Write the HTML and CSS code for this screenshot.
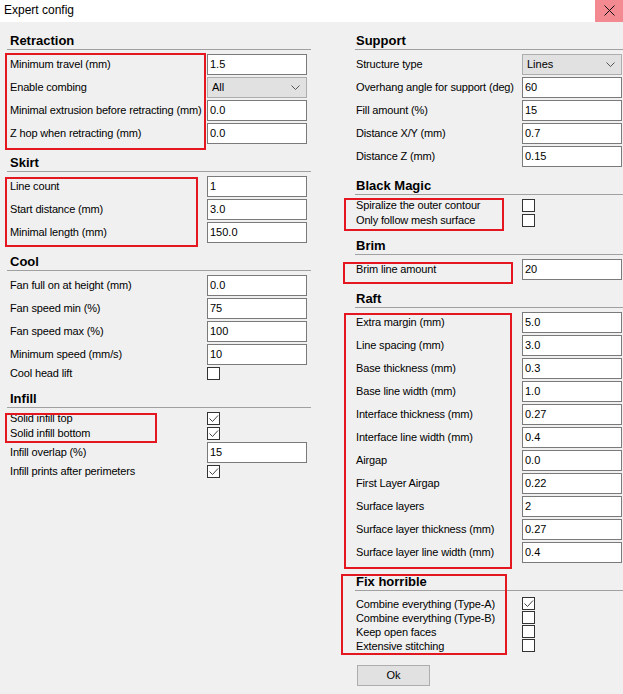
FILE: index.html
```html
<!DOCTYPE html>
<html>
<head>
<meta charset="utf-8">
<title>Expert config</title>
<link rel="stylesheet" href="styles.css">
</head>
<body>
<div class="window">
  <div class="titlebar">
    <span class="title">Expert config</span>
    <span class="close"><svg width="11" height="11" viewBox="0 0 11 11"><path d="M0.5 0.5 L10.5 10.5 M10.5 0.5 L0.5 10.5" stroke="#111" stroke-width="1" fill="none"/></svg></span>
  </div>
  <div class="content">
    <div class="col col-left">
      <section class="sec">
        <h2 class="head">Retraction</h2>
        <div class="rows">
          <span class="lbl">Minimum travel (mm)</span><div class="field">1.5</div>
          <span class="lbl">Enable combing</span><div class="select">All<svg class="chev" width="9" height="5" viewBox="0 0 9 5"><path d="M0.5 0.5 L4.5 4.5 L8.5 0.5" stroke="#555" stroke-width="1" fill="none"/></svg></div>
          <span class="lbl">Minimal extrusion before retracting (mm)</span><div class="field">0.0</div>
          <span class="lbl">Z hop when retracting (mm)</span><div class="field">0.0</div>
        </div>
      </section>
      <section class="sec">
        <h2 class="head">Skirt</h2>
        <div class="rows">
          <span class="lbl">Line count</span><div class="field">1</div>
          <span class="lbl">Start distance (mm)</span><div class="field">3.0</div>
          <span class="lbl">Minimal length (mm)</span><div class="field">150.0</div>
        </div>
      </section>
      <section class="sec">
        <h2 class="head">Cool</h2>
        <div class="rows">
          <span class="lbl">Fan full on at height (mm)</span><div class="field">0.0</div>
          <span class="lbl">Fan speed min (%)</span><div class="field">75</div>
          <span class="lbl">Fan speed max (%)</span><div class="field">100</div>
          <span class="lbl">Minimum speed (mm/s)</span><div class="field">10</div>
          <span class="lbl">Cool head lift</span><span class="cb"></span>
        </div>
      </section>
      <section class="sec">
        <h2 class="head">Infill</h2>
        <div class="rows">
          <span class="lbl">Solid infill top</span><span class="cb"><svg width="11" height="11" viewBox="0 0 11 11"><path d="M1.5 5.5 L4.5 8.5 L10 2.5" stroke="#444" stroke-width="1" fill="none"/></svg></span>
          <span class="lbl">Solid infill bottom</span><span class="cb"><svg width="11" height="11" viewBox="0 0 11 11"><path d="M1.5 5.5 L4.5 8.5 L10 2.5" stroke="#444" stroke-width="1" fill="none"/></svg></span>
          <span class="lbl">Infill overlap (%)</span><div class="field">15</div>
          <span class="lbl">Infill prints after perimeters</span><span class="cb"><svg width="11" height="11" viewBox="0 0 11 11"><path d="M1.5 5.5 L4.5 8.5 L10 2.5" stroke="#444" stroke-width="1" fill="none"/></svg></span>
        </div>
      </section>
    </div>
    <div class="col col-right">
      <section class="sec">
        <h2 class="head">Support</h2>
        <div class="rows">
          <span class="lbl">Structure type</span><div class="select">Lines<svg class="chev" width="9" height="5" viewBox="0 0 9 5"><path d="M0.5 0.5 L4.5 4.5 L8.5 0.5" stroke="#555" stroke-width="1" fill="none"/></svg></div>
          <span class="lbl">Overhang angle for support (deg)</span><div class="field">60</div>
          <span class="lbl">Fill amount (%)</span><div class="field">15</div>
          <span class="lbl">Distance X/Y (mm)</span><div class="field">0.7</div>
          <span class="lbl">Distance Z (mm)</span><div class="field">0.15</div>
        </div>
      </section>
      <section class="sec">
        <h2 class="head">Black Magic</h2>
        <div class="rows">
          <span class="lbl">Spiralize the outer contour</span><span class="cb"></span>
          <span class="lbl">Only follow mesh surface</span><span class="cb"></span>
        </div>
      </section>
      <section class="sec">
        <h2 class="head">Brim</h2>
        <div class="rows">
          <span class="lbl">Brim line amount</span><div class="field">20</div>
        </div>
      </section>
      <section class="sec">
        <h2 class="head">Raft</h2>
        <div class="rows">
          <span class="lbl">Extra margin (mm)</span><div class="field">5.0</div>
          <span class="lbl">Line spacing (mm)</span><div class="field">3.0</div>
          <span class="lbl">Base thickness (mm)</span><div class="field">0.3</div>
          <span class="lbl">Base line width (mm)</span><div class="field">1.0</div>
          <span class="lbl">Interface thickness (mm)</span><div class="field">0.27</div>
          <span class="lbl">Interface line width (mm)</span><div class="field">0.4</div>
          <span class="lbl">Airgap</span><div class="field">0.0</div>
          <span class="lbl">First Layer Airgap</span><div class="field">0.22</div>
          <span class="lbl">Surface layers</span><div class="field">2</div>
          <span class="lbl">Surface layer thickness (mm)</span><div class="field">0.27</div>
          <span class="lbl">Surface layer line width (mm)</span><div class="field">0.4</div>
        </div>
      </section>
      <section class="sec">
        <h2 class="head">Fix horrible</h2>
        <div class="rows rows-fix">
          <span class="lbl">Combine everything (Type-A)</span><span class="cb"><svg width="11" height="11" viewBox="0 0 11 11"><path d="M1.5 5.5 L4.5 8.5 L10 2.5" stroke="#444" stroke-width="1" fill="none"/></svg></span>
          <span class="lbl">Combine everything (Type-B)</span><span class="cb"></span>
          <span class="lbl">Keep open faces</span><span class="cb"></span>
          <span class="lbl">Extensive stitching</span><span class="cb"></span>
        </div>
      </section>
      <div class="btn">Ok</div>
    </div>
  </div>
  <div class="mark mark-retraction"></div>
  <div class="mark mark-skirt"></div>
  <div class="mark mark-infill"></div>
  <div class="mark mark-magic"></div>
  <div class="mark mark-brim"></div>
  <div class="mark mark-raft"></div>
  <div class="mark mark-fix"></div>
</div>
</body>
</html>
```
FILE: styles.css
```css
* { box-sizing: border-box; }
html, body { margin: 0; padding: 0; }
body {
  font-family: "Liberation Sans", Arial, sans-serif;
  font-size: 11px;
  color: #000;
  background: #f0f0f0;
}
.window {
  position: relative;
  width: 623px;
  height: 694px;
  background: #f0f0f0;
  overflow: hidden;
}
.titlebar {
  height: 22px;
  background: #fff;
  display: flex;
  align-items: center;
  justify-content: space-between;
}
.title {
  font-size: 12px;
  padding-left: 4px;
  padding-bottom: 2px;
}
.close {
  width: 28px;
  height: 22px;
  background: #f38991;
  display: flex;
  align-items: center;
  justify-content: center;
  padding-bottom: 1px;
}
.content {
  display: flex;
  padding-top: 10px;
}
.col-left {
  margin-left: 7px;
  width: 304px;
}
.col-right {
  margin-left: 44px;
  width: 268px;
}
.sec + .sec { margin-top: 10px; }
.head {
  margin: 0;
  height: 18px;
  line-height: 17px;
  font-size: 13px;
  font-weight: bold;
  border-bottom: 1px solid #a0a0a0;
  padding-left: 3px;
}
.col-right .head { padding-left: 1px; }
.rows {
  display: grid;
  grid-template-columns: 197px 100px;
  row-gap: 2px;
  align-items: center;
  padding: 4px 0 0 3px;
}
.col-right .rows {
  grid-template-columns: 166px 100px;
  padding-left: 1px;
}
.col-right .rows-fix { padding-top: 6px; row-gap: 1px; }
.rows-fix .lbl { line-height: 12px; }
.lbl {
  line-height: 13px;
  white-space: nowrap;
  letter-spacing: -0.15px;
}
.field {
  height: 21px;
  background: #fff;
  border: 1px solid #7a7a7a;
  line-height: 19px;
  padding-left: 2px;
}
.select {
  height: 21px;
  background: #e1e1e1;
  border: 1px solid #adadad;
  line-height: 19px;
  padding-left: 4px;
  display: flex;
  align-items: center;
  justify-content: space-between;
}
.chev { margin-right: 6px; }
.cb {
  width: 13px;
  height: 13px;
  background: #fff;
  border: 1px solid #333;
  display: block;
}
.cb svg { display: block; }
.btn {
  margin: 13px 0 0 2px;
  width: 73px;
  height: 21px;
  background: #e1e1e1;
  border: 1px solid #adadad;
  text-align: center;
  line-height: 19px;
}
.mark {
  position: absolute;
  border: 2px solid #e4161f;
}
.mark-retraction { left: 5px; top: 53px; width: 201px; height: 97px; }
.mark-skirt { left: 5px; top: 177px; width: 193px; height: 70px; }
.mark-infill { left: 5px; top: 413px; width: 152px; height: 30px; }
.mark-magic { left: 344px; top: 198px; width: 160px; height: 33px; }
.mark-brim { left: 343px; top: 262px; width: 170px; height: 22px; }
.mark-raft { left: 344px; top: 313px; width: 168px; height: 256px; }
.mark-fix { left: 341px; top: 574px; width: 166px; height: 81px; }
```
